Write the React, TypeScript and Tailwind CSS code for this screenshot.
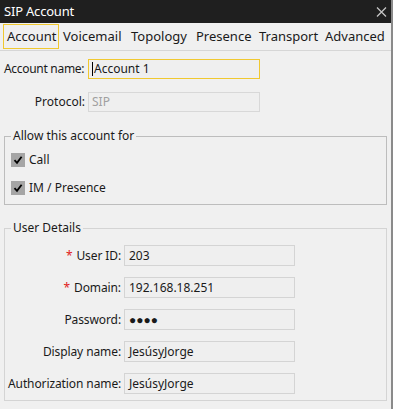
import React from "react";

const font = { fontFamily: '"Noto Sans", "Open Sans", sans-serif' };

function Check({ label }: { label: string }) {
  return (
    <div className="flex items-center h-[14px]">
      <div className="w-[14px] h-[14px] bg-[#a5a5a5] flex items-center justify-center">
        <svg width="10" height="10" viewBox="0 0 10 10">
          <path d="M1.5 5.2 L4 7.8 L8.6 1.8" stroke="#000" strokeWidth="1.8" fill="none" />
        </svg>
      </div>
      <span className="ml-[4px] text-[12px] text-[#1a1a1a]">{label}</span>
    </div>
  );
}

function Row({ label, value, req }: { label: string; value: string; req?: boolean }) {
  return (
    <div className="flex items-center h-[21px]">
      <div className="w-[116px] text-right text-[12px] tracking-[-0.1px] text-[#1a1a1a] pr-[3px] whitespace-nowrap">
        {req && <span className="text-[#e02020] mr-[4px]">*</span>}
        {label}
      </div>
      <div className="w-[171px] h-[21px] border border-[#d4d4d4] bg-[#efefef] text-[12px] text-[#1a1a1a] pl-[4px] flex items-center">
        {value}
      </div>
    </div>
  );
}

export default function App() {
  return (
    <div style={font} className="w-[393px] h-[409px] bg-[#f0f0f0] relative overflow-hidden border-r-2 border-[#8a8a8a]">
      <div className="h-[23px] bg-[#1f1f1f] flex items-center justify-between pl-[4px] pr-[6px] -mr-[2px]">
        <span className="text-white text-[13px] tracking-[-0.2px]">SIP Account</span>
        <svg width="11" height="10" viewBox="0 0 11 10">
          <path d="M1 0.5 L10 9.5 M10 0.5 L1 9.5" stroke="#c4c4c4" strokeWidth="1.3" />
        </svg>
      </div>
      <div className="h-[28px] border-b border-[#d6d6d6] flex items-center pl-[3px] text-[13px] text-[#1a1a1a] whitespace-nowrap">
        <div className="w-[56px] h-[25px] pl-[3px] border border-[#f0c830] flex items-center">Account</div>
        <div className="w-[72px] pl-[4px]">Voicemail</div>
        <div className="w-[65px]">Topology</div>
        <div className="w-[63px]">Presence</div>
        <div className="w-[66px]">Transport</div>
        <div>Advanced</div>
      </div>
      <div className="pt-[8px]">
        <div className="flex items-center h-[20px]">
          <div className="w-[88px] pl-[4px] text-[12px] tracking-[-0.3px] text-[#1a1a1a] whitespace-nowrap">Account name:</div>
          <div className="w-[172px] h-[20px] border border-[#f0c830] bg-[#efefef] text-[12px] text-[#1a1a1a] pl-[3px] flex items-center">
            <span className="w-px h-[14px] bg-black mr-px" />Account 1
          </div>
        </div>
        <div className="flex items-center h-[20px] mt-[13px]">
          <div className="w-[88px] text-right pr-[3px] text-[12px] text-[#1a1a1a]">Protocol:</div>
          <div className="w-[172px] h-[20px] border border-[#d8d8d8] bg-[#efefef] text-[12px] text-[#a0a0a0] pl-[3px] flex items-center">SIP</div>
        </div>
        <fieldset className="mx-[4px] mt-[17px] border border-[#bdbdbd] h-[76px] px-[6px] pt-[10px]">
          <legend className="px-[2px] text-[12px] text-[#1a1a1a] leading-[14px]">Allow this account for</legend>
          <Check label="Call" />
          <div className="mt-[14px]"><Check label="IM / Presence" /></div>
        </fieldset>
        <fieldset className="mx-[4px] mt-[16px] border border-[#d4d4d4] h-[180px] px-[3px] pt-[10px]">
          <legend className="ml-[3px] px-[2px] text-[12px] text-[#1a1a1a] leading-[14px]">User Details</legend>
          <div className="flex flex-col gap-[11px]">
            <Row label="User ID:" value="203" req />
            <Row label="Domain:" value="192.168.18.251" req />
            <Row label="Password:" value="●●●●" />
            <Row label="Display name:" value="JesúsyJorge" />
            <Row label="Authorization name:" value="JesúsyJorge" />
          </div>
        </fieldset>
      </div>
    </div>
  );
}
